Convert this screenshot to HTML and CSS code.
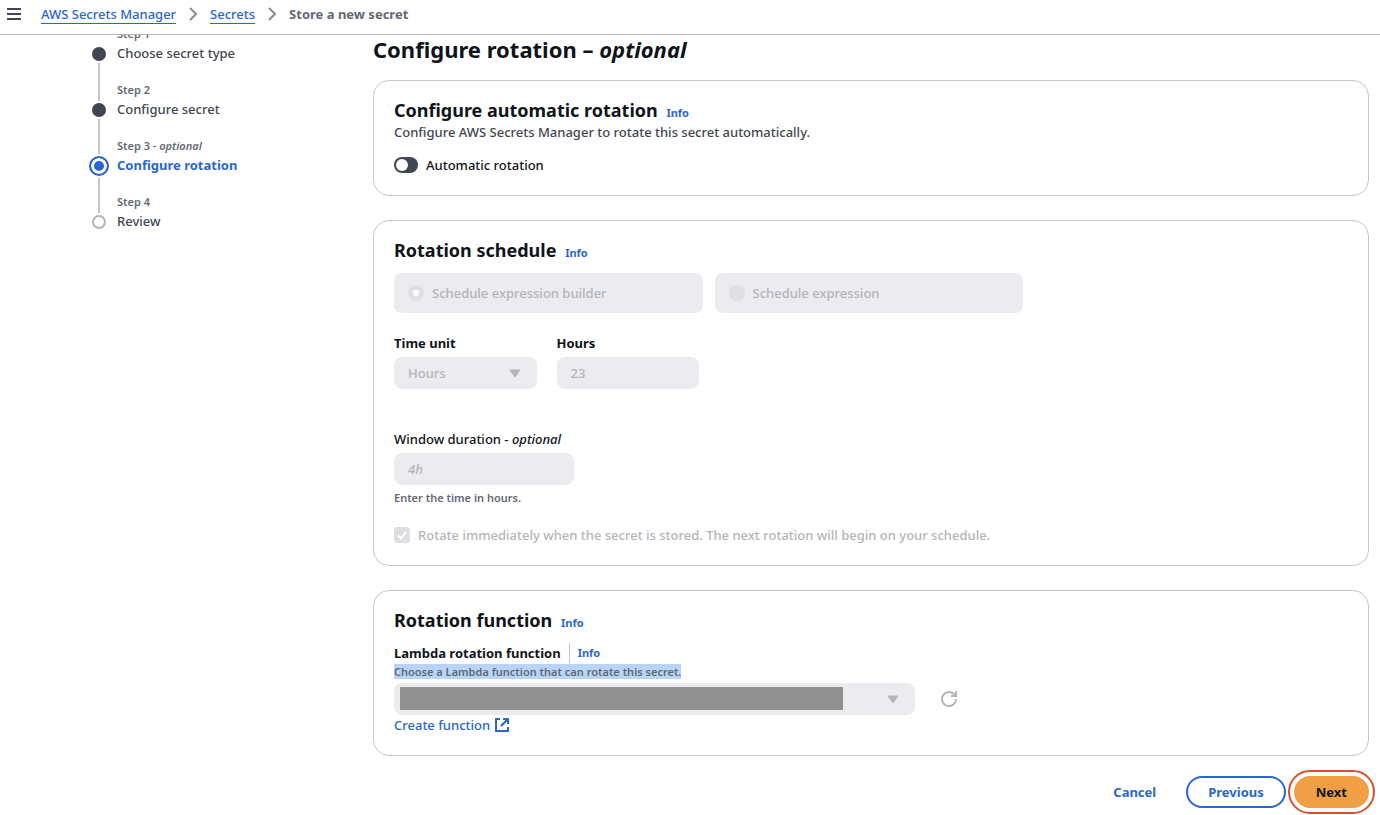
FILE: index.html
```
<!DOCTYPE html>
<html lang="en">
  <head>
    <meta charset="utf-8">
    <title>Store a new secret</title>
    <link rel="stylesheet" href="styles.css">
  </head>
  <body>
    <header class="top-bar">
      <button type="button" class="menu-button" aria-label="Open navigation">
        <svg width="14" height="12" viewBox="0 0 14 12"><path d="M0 1h14M0 6h14M0 11h14" /></svg>
      </button>
      <nav class="breadcrumbs" aria-label="Breadcrumbs">
        <a href="#">AWS Secrets Manager</a>
        <svg width="8" height="14" viewBox="0 0 8 14"><path d="M1 1l6 6-6 6" /></svg>
        <a href="#">Secrets</a>
        <svg width="8" height="14" viewBox="0 0 8 14"><path d="M1 1l6 6-6 6" /></svg>
        <span class="current">Store a new secret</span>
      </nav>
    </header>

    <div class="layout">
      <nav class="steps" aria-label="Steps">
        <ol>
          <li class="step done">
            <span class="marker"></span>
            <span class="step-label">Step 1</span>
            <span class="step-title">Choose secret type</span>
          </li>
          <li class="step done">
            <span class="marker"></span>
            <span class="step-label">Step 2</span>
            <span class="step-title">Configure secret</span>
          </li>
          <li class="step active">
            <span class="marker"></span>
            <span class="step-label">Step 3 - <em>optional</em></span>
            <span class="step-title">Configure rotation</span>
          </li>
          <li class="step">
            <span class="marker"></span>
            <span class="step-label">Step 4</span>
            <span class="step-title">Review</span>
          </li>
        </ol>
      </nav>

      <main>
        <h1>Configure rotation – <em>optional</em></h1>

        <form id="rotation-form">
          <section class="card">
            <h2>Configure automatic rotation <a href="#" class="info">Info</a></h2>
            <p class="description">Configure AWS Secrets Manager to rotate this secret automatically.</p>
            <label class="toggle">
              <input type="checkbox" role="switch" name="automatic">
              Automatic rotation
            </label>
          </section>

          <section class="card">
            <h2>Rotation schedule <a href="#" class="info">Info</a></h2>
            <div class="tiles">
              <label class="tile">
                <input type="radio" name="schedule" value="builder" checked disabled>
                Schedule expression builder
              </label>
              <label class="tile">
                <input type="radio" name="schedule" value="expression" disabled>
                Schedule expression
              </label>
            </div>

            <div class="field-row">
              <div class="field">
                <label for="time-unit">Time unit</label>
                <div class="select-box">
                  <select id="time-unit" disabled>
                    <option>Hours</option>
                  </select>
                  <svg class="caret" width="12" height="9" viewBox="0 0 12 9"><path d="M1 1h10L6 8z" /></svg>
                </div>
              </div>
              <div class="field">
                <label for="hours">Hours</label>
                <input type="text" id="hours" value="23" disabled>
              </div>
            </div>

            <div class="field duration">
              <label for="duration">Window duration - <em>optional</em></label>
              <input type="text" id="duration" placeholder="4h" disabled>
              <p class="hint">Enter the time in hours.</p>
            </div>

            <label class="check">
              <span class="check-box">
                <input type="checkbox" name="immediately" checked disabled>
                <svg width="16" height="16" viewBox="0 0 16 16"><path d="M4 8.5l3 3 5-7" /></svg>
              </span>
              Rotate immediately when the secret is stored. The next rotation will begin on your schedule.
            </label>
          </section>

          <section class="card">
            <h2>Rotation function <a href="#" class="info">Info</a></h2>
            <div class="function-label">
              <label for="lambda">Lambda rotation function</label>
              <a href="#" class="info">Info</a>
            </div>
            <p class="hint"><mark>Choose a Lambda function that can rotate this secret.</mark></p>
            <div class="function-row">
              <div class="select-box">
                <select id="lambda" disabled>
                  <option></option>
                </select>
                <span class="mask"></span>
                <svg class="caret" width="12" height="9" viewBox="0 0 12 9"><path d="M1 1h10L6 8z" /></svg>
              </div>
              <button type="button" class="refresh" aria-label="Refresh functions" disabled>
                <svg width="16" height="16" viewBox="0 0 16 16"><path d="M15 8a7 7 0 1 1-2.200-5L15 5M15 0v5h-5" /></svg>
              </button>
            </div>
            <a href="#" class="create-link">
              Create function
              <svg width="14" height="14" viewBox="0 0 14 14"><path d="M5 1H1v12h12V9M8 1h5v5M13 1L6 8" /></svg>
            </a>
          </section>

          <div class="actions">
            <button type="button" class="cancel">Cancel</button>
            <button type="button" class="previous">Previous</button>
            <button type="submit" class="next">Next</button>
          </div>
        </form>
      </main>
    </div>
  </body>
</html>
```
FILE: styles.css
```
* {
  box-sizing: border-box;
}

body {
  margin: 0;
  background-color: #fff;
  color: #0f141a;
  font-family: "Noto Sans", "Open Sans", sans-serif;
  font-size: 13px;
  font-weight: 500;
  line-height: 20px;
}

input,
select,
button {
  font: inherit;
}

a {
  color: #2a66cf;
}

svg {
  display: block;
  fill: none;
  stroke: currentColor;
  stroke-width: 2;
}

h1,
h2,
p,
ol {
  margin: 0;
  padding: 0;
}

/* Top bar */
.top-bar {
  position: sticky;
  top: 0;
  z-index: 1;
  display: flex;
  align-items: center;
  gap: 20px;
  height: 35px;
  padding: 0 7px 6px;
  background-color: #fff;
  border-bottom: 1px solid #b4b4bb;
}

.menu-button {
  padding: 0;
  border: none;
  background: none;
  color: #424650;
}

.breadcrumbs {
  display: flex;
  align-items: center;
  gap: 13px;
  color: #8c8c94;
}

.breadcrumbs a {
  text-underline-offset: 4px;
}

.breadcrumbs .current {
  color: #656871;
  font-weight: bold;
}

/* Page layout */
.layout {
  display: flex;
  margin-top: -10px;
}

main {
  flex: 1;
  padding: 10px 11px 7px 0;
}

/* Steps */
.steps {
  width: 373px;
  padding-left: 89px;
}

.step {
  position: relative;
  display: flex;
  flex-direction: column;
  min-height: 56px;
  padding-left: 28px;
  color: #424650;
}

.step-label {
  font-size: 11px;
  font-weight: 600;
  line-height: 18px;
  color: #656871;
}

.marker {
  position: absolute;
  left: 3px;
  top: 22px;
  width: 14px;
  height: 14px;
  border: 2px solid #b4b4bb;
  border-radius: 50%;
  box-shadow: 0 0 0 2px #fff;
}

/* Line down to the next step */
.step:not(:last-child)::after {
  content: "";
  position: absolute;
  left: 9px;
  top: 38px;
  width: 2px;
  height: 38px;
  background-color: #c6c6cd;
}

.done .marker {
  border-color: #424650;
  background-color: #424650;
}

.active .marker {
  left: 0;
  top: 19px;
  width: 20px;
  height: 20px;
  border-color: #2a66cf;
  background-color: #2a66cf;
  box-shadow: inset 0 0 0 3px #fff, 0 0 0 2px #fff;
}

.active .step-title {
  color: #2a66cf;
  font-weight: bold;
}

.step.active::after {
  top: 41px;
  height: 35px;
}

/* Headings */
h1 {
  margin-bottom: 17px;
  font-size: 22px;
  line-height: 28px;
}

h2 {
  font-size: 18px;
  line-height: 24px;
}

.info {
  margin-left: 4px;
  font-size: 11px;
  font-weight: bold;
  line-height: 12px;
  text-decoration: none;
}

/* Cards */
.card {
  margin-bottom: 24px;
  padding: 17px 20px 20px;
  border: 1px solid #c6c6cd;
  border-radius: 16px;
}

.description {
  color: #424650;
}

.toggle {
  display: flex;
  align-items: center;
  gap: 8px;
  margin-top: 13px;
}

.toggle input {
  appearance: none;
  width: 24px;
  height: 16px;
  margin: 0;
  padding: 2px;
  border-radius: 8px;
  background-color: #424650;
}

.toggle input::before {
  content: "";
  display: block;
  width: 12px;
  height: 12px;
  border-radius: 50%;
  background-color: #fff;
}

.toggle input:checked::before {
  margin-left: 8px;
}

/* Schedule tiles */
.tiles {
  display: grid;
  grid-template-columns: 1fr 1fr;
  gap: 12px;
  max-width: 629px;
  margin-top: 11px;
}

.tile {
  display: flex;
  align-items: center;
  gap: 8px;
  padding: 10px 14px;
  border-radius: 8px;
  background-color: #ebebf0;
  color: #b4b4bb;
}

.tile input {
  appearance: none;
  width: 16px;
  height: 16px;
  margin: 0;
  border-radius: 50%;
  background-color: #dedee3;
}

.tile input:checked {
  border: 5px solid #dedee3;
  background-color: #fff;
}

/* Form fields */
.field-row {
  display: grid;
  grid-template-columns: 1fr 1fr;
  gap: 20px;
  max-width: 305px;
  margin-top: 20px;
}

.field label {
  display: block;
  margin-bottom: 4px;
}

.field-row label,
.function-label label {
  font-weight: bold;
}

.field input,
.select-box select {
  appearance: none;
  display: block;
  width: 100%;
  height: 32px;
  padding: 0 14px;
  border: none;
  border-radius: 8px;
  background-color: #ebebf0;
  color: #b4b4bb;
  opacity: 1;
}

.field input::placeholder {
  color: #b4b4bb;
  font-style: italic;
}

.select-box {
  position: relative;
}

.caret {
  position: absolute;
  top: 12px;
  right: 16px;
  fill: #b4b4bb;
  stroke: #b4b4bb;
  stroke-width: 1;
}

.duration {
  margin-top: 40px;
}

.duration input {
  max-width: 180px;
}

.hint {
  color: #656871;
  font-size: 11px;
  font-weight: 600;
  line-height: 16px;
}

.duration .hint {
  margin-top: 5px;
}

.check {
  display: flex;
  align-items: center;
  gap: 8px;
  margin-top: 19px;
  color: #b4b4bb;
}

.check-box {
  position: relative;
}

.check-box input {
  appearance: none;
  display: block;
  width: 16px;
  height: 16px;
  margin: 0;
  border-radius: 3px;
  background-color: #dedee3;
}

.check-box svg {
  position: absolute;
  top: 0;
  left: 0;
  color: #fff;
}

/* Rotation function */
.function-label {
  display: flex;
  align-items: center;
  gap: 8px;
  margin-top: 11px;
}

.function-label .info {
  margin: 0;
  padding-left: 8px;
  border-left: 1px solid #c6c6cd;
  line-height: 20px;
}

mark {
  background-color: #b8d4f8;
  color: inherit;
}

.function-label + .hint {
  margin-top: 1px;
}

.function-row {
  display: flex;
  align-items: center;
  gap: 26px;
  margin-top: 3px;
}

.function-row .select-box {
  flex: 0 1 521px;
}

.mask {
  position: absolute;
  top: 4px;
  bottom: 5px;
  left: 6px;
  right: 72px;
  background-color: #919191;
}

.refresh {
  padding: 0;
  border: none;
  background: none;
  color: #b4b4bb;
}

.create-link {
  display: inline-flex;
  align-items: center;
  gap: 5px;
  text-decoration: none;
}

/* Buttons */
.actions {
  display: flex;
  justify-content: flex-end;
  gap: 8px;
  margin-top: -4px;
}

.actions button {
  height: 32px;
  padding: 0 20px;
  border: 2px solid transparent;
  border-radius: 16px;
  background: none;
  color: #2a66cf;
  font-weight: bold;
  cursor: pointer;
}

.actions .previous {
  border-color: #2a66cf;
}

.actions .next {
  background-color: #f09f45;
  border-color: #f09f45;
  color: #0f141a;
  outline: 2px solid #d94f35;
  outline-offset: 4px;
}
```
